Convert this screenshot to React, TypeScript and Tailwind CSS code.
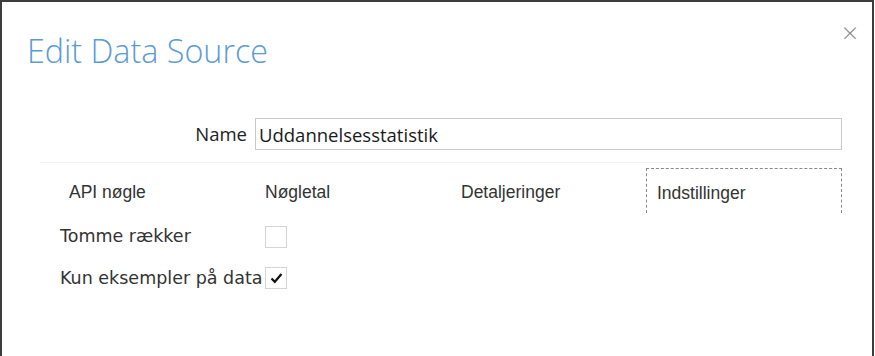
import React, { useState } from 'react';

const tabs = ['API nøgle', 'Nøgletal', 'Detaljeringer', 'Indstillinger'];

export default function App() {
  const [name, setName] = useState('Uddannelsesstatistik');
  const [activeTab, setActiveTab] = useState(3);
  const [emptyRows, setEmptyRows] = useState(false);
  const [samplesOnly, setSamplesOnly] = useState(true);

  return (
    <div className="w-[874px] h-[356px] bg-white border-l-2 border-t-2 border-r-2 border-[#3c3c3c] relative">
      <button className="absolute top-[16px] right-[14px] text-[28px] leading-none text-[#8a8a8a] font-['Open_Sans',sans-serif] font-light">
        ×
      </button>

      <h1 className="pl-[25px] pt-[28px] text-[32.3px] leading-[40px] font-light text-[#5b9bd5] font-['Open_Sans',sans-serif]">
        Edit Data Source
      </h1>

      {/* navn */}
      <div className="mt-[48px] flex items-center">
        <label className="w-[246px] text-right pr-[1px] text-[18.5px] text-[#222] font-['Open_Sans',sans-serif]">
          Name
        </label>
        <input
          value={name}
          onChange={(e) => setName(e.target.value)}
          className="ml-[7px] w-[587px] h-[32px] border border-[#c8c8c8] px-[3px] text-[18.5px] text-[#1a1a1a] font-['Open_Sans',sans-serif] outline-none"
        />
      </div>

      <div className="mt-[12px] mx-[38px] h-px bg-[#f1f1f1]" />

      {/* faner */}
      <div className="mt-[5px] ml-[56px] flex">
        {tabs.map((tab, i) => (
          <button
            key={tab}
            onClick={() => setActiveTab(i)}
            className={
              'w-[196px] h-[45px] text-left pl-[10px] pt-[4px] text-[17.5px] text-[#333] font-["Liberation_Sans",Arial,sans-serif] ' +
              (i === activeTab ? 'border border-b-0 border-dashed border-[#888]' : 'border border-transparent')
            }
          >
            {tab}
          </button>
        ))}
      </div>

      {/* indstillinger */}
      <div className="ml-[58px] mt-[10px] flex flex-col gap-[14px] font-['DejaVu_Sans',Verdana,sans-serif] text-[17.5px] text-[#333]">
        <label className="flex items-center">
          <span className="w-[205px] pb-[2px]">Tomme rækker</span>
          <span
            onClick={() => setEmptyRows(!emptyRows)}
            className="w-[22px] h-[22px] border border-[#d4d4d4] flex items-center justify-center"
          >
            {emptyRows && <Check />}
          </span>
        </label>
        <label className="flex items-center">
          <span className="w-[205px] whitespace-nowrap">Kun eksempler på data</span>
          <span
            onClick={() => setSamplesOnly(!samplesOnly)}
            className="w-[22px] h-[22px] border border-[#d4d4d4] flex items-center justify-center"
          >
            {samplesOnly && <Check />}
          </span>
        </label>
      </div>
    </div>
  );
}

function Check() {
  return (
    <svg width="13" height="12" viewBox="0 0 13 12">
      <path d="M1.5 6.5 L4.8 9.8 L11.5 2" fill="none" stroke="#111" strokeWidth="2.2" />
    </svg>
  );
}
